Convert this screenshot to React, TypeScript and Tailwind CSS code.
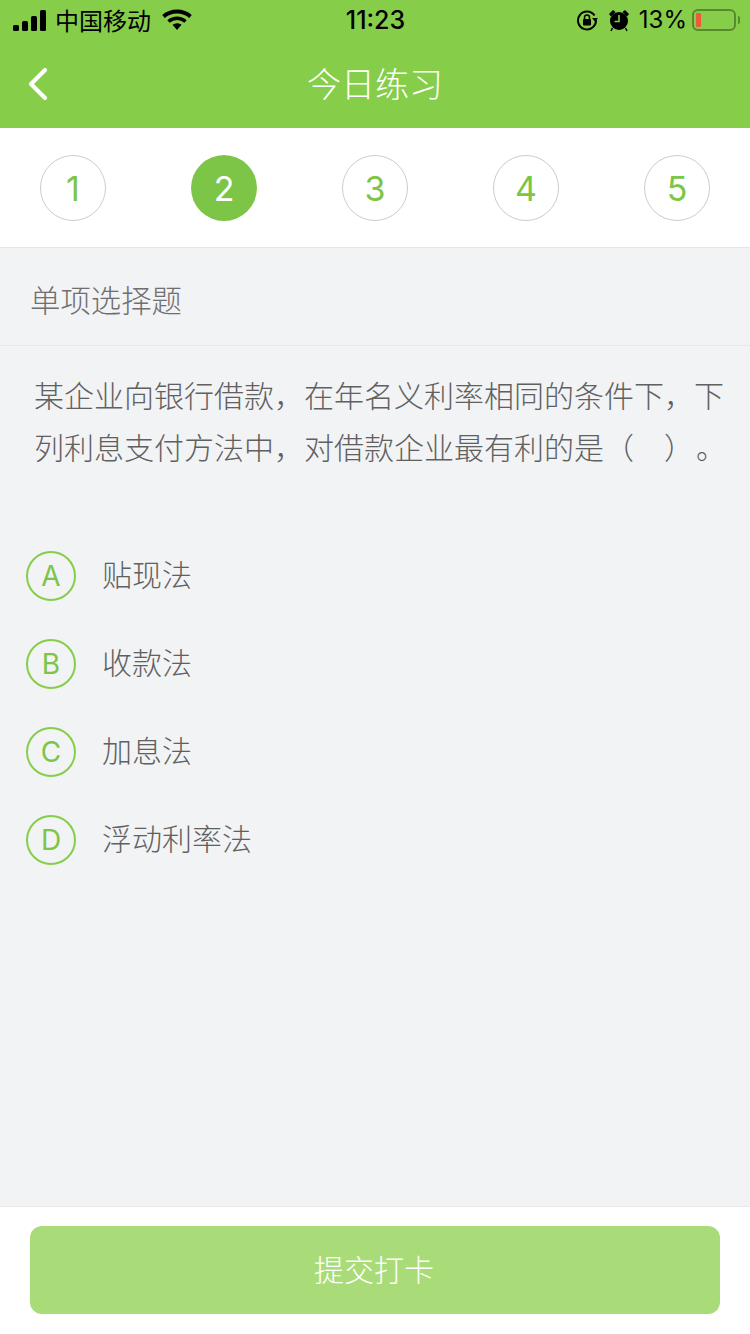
import * as React from "react";
import { ChevronLeft } from "lucide-react";

const font = "font-['Noto_Sans_CJK_SC','Noto_Sans',sans-serif]";
const latin = "font-['Inter','Noto_Sans_CJK_SC',sans-serif]";

const steps = [1, 2, 3, 4, 5];

const options = [
  { key: "A", text: "贴现法" },
  { key: "B", text: "收款法" },
  { key: "C", text: "加息法" },
  { key: "D", text: "浮动利率法" },
];

function StatusBar() {
  return (
    <div className="flex h-[40px] items-center justify-between pl-[13px] pr-[10px] text-black">
      <div className="flex w-[260px] items-center">
        <div className="flex items-end gap-[3px]">
          <span className="h-[6px] w-[6px] rounded-[1.5px] bg-black" />
          <span className="h-[10px] w-[6px] rounded-[1.5px] bg-black" />
          <span className="h-[15px] w-[6px] rounded-[1.5px] bg-black" />
          <span className="h-[21px] w-[6px] rounded-[1.5px] bg-black" />
        </div>
        <span className="ml-[9px] text-[24px] leading-[30px] font-normal">中国移动</span>
        <svg className="ml-[11px]" width="30" height="22" viewBox="0 0 30 22">
          <path d="M1.500 7.500C9 .8 21 .8 28.500 7.500" fill="none" stroke="#000" strokeWidth="3.800" />
          <path d="M6.500 12.500c5-4.300 12-4.300 17 0" fill="none" stroke="#000" strokeWidth="3.600" />
          <path d="M10.500 15.800c2.800-2 6.200-2 9 0L15 21z" fill="#000" />
        </svg>
      </div>
      <span className={`-ml-[2px] text-[25px] font-medium leading-[30px] ${latin}`}>11:23</span>
      <div className="flex w-[260px] items-center justify-end">
        <svg width="22" height="22" viewBox="0 0 22 22">
          <path d="M18.500 6.500A9 9 0 1 0 20 11" fill="none" stroke="#000" strokeWidth="2" />
          <path d="M16 9h6l-3 3.500z" fill="#000" />
          <rect x="7" y="10" width="8" height="6.500" rx="1" fill="#000" />
          <path d="M8.500 10V8.500a2.500 2.500 0 0 1 5 0V10" fill="none" stroke="#000" strokeWidth="1.500" />
        </svg>
        <svg className="ml-[10px]" width="22" height="24" viewBox="0 0 22 24">
          <circle cx="11" cy="13" r="9" fill="#000" />
          <path d="M11 7v6.500H6.500" fill="none" stroke="#86cd4a" strokeWidth="1.600" />
          <path d="M1 6l4-4 2.500 2-4.500 4.500zM21 6l-4-4-2.500 2 4.500 4.500z" fill="#000" />
          <path d="M4.500 20L3 23M17.500 20l1.500 3" stroke="#000" strokeWidth="1.500" />
        </svg>
        <span className={`ml-[9px] text-[24px] font-normal leading-[30px] ${latin}`}>13%</span>
        <div className="ml-[5px] flex h-[22px] w-[44px] items-center rounded-[6px] border-2 border-[#568a2c] pl-[2px]">
          <span className="h-[14px] w-[5px] rounded-[1px] bg-[#ef5a3c]" />
        </div>
        <span className="ml-[2px] h-[8px] w-[2px] rounded-r-sm bg-[#568a2c]" />
      </div>
    </div>
  );
}

export default function App() {
  return (
    <div className={`flex h-[1334px] w-[750px] flex-col bg-[#f2f3f5] ${font}`}>
      <div className="h-[128px] bg-[#86cd4a]">
        <StatusBar />
        <div className="relative flex h-[88px] items-center justify-center pb-[2px]">
          <ChevronLeft className="absolute left-[10px] top-[16px] text-white" size={56} strokeWidth={1.8} />
          <span className="text-[34px] font-light leading-[44px] text-white">今日练习</span>
        </div>
      </div>

      <div className="flex h-[120px] items-start justify-between border-b border-[#e6e6e6] bg-white px-[40px] pt-[27px]">
        {steps.map((n) => (
          <div
            key={n}
            className={
              n === 2
                ? `flex h-[66px] w-[66px] items-center justify-center rounded-full bg-[#7cc546] text-[34px] font-normal text-white ${latin}`
                : `flex h-[66px] w-[66px] items-center justify-center rounded-full border border-[#cccccc] text-[34px] font-normal text-[#7cc546] ${latin}`
            }
          >
            {n}
          </div>
        ))}
      </div>

      <div className="flex h-[98px] items-center border-b border-[#e6e7e9] pl-[30px] pt-[6px] text-[30.4px] font-light text-[#6f6f6f]">
        单项选择题
      </div>

      <div className="whitespace-nowrap pl-[34px] pt-[22px] text-[30px] font-light leading-[52px] text-[#606060]">
        <p>某企业向银行借款，在年名义利率相同的条件下，下</p>
        <p>
          列利息支付方法中，对借款企业最有利的是（<span className="inline-block w-[30px]" />）<span className="inline-block w-[2px]" />。
        </p>
      </div>

      <div className="mt-[79px] flex flex-col gap-[38px] pl-[26px]">
        {options.map((o) => (
          <div key={o.key} className="flex h-[50px] items-center">
            <span className={`flex h-[50px] w-[50px] items-center justify-center rounded-full border-2 border-[#86cd4a] text-[28px] font-normal text-[#7cc546] ${latin}`}>
              {o.key}
            </span>
            <span className="ml-[26px] pb-[6px] text-[30px] font-light leading-[50px] text-[#606060]">{o.text}</span>
          </div>
        ))}
      </div>

      <div className="mt-auto h-[128px] border-t border-[#e8e9eb] bg-white px-[30px] pt-[19px]">
        <button className="flex h-[88px] w-full items-center justify-center rounded-[12px] bg-[#a9dc78] pb-[3px] pr-[2px] text-[30px] font-light text-white">
          提交打卡
        </button>
      </div>
    </div>
  );
}
